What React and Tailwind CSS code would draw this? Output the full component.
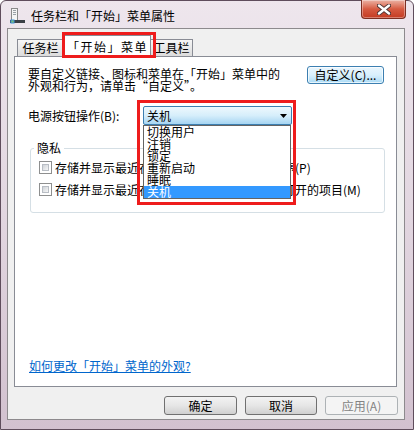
import React from "react";

const TaskbarIcon = () => (
  <svg width="16" height="16" viewBox="0 0 16 16" className="shrink-0">
    <rect x="1.5" y="0.5" width="6" height="12" fill="#f4f4f4" stroke="#8a8a8a" />
    <rect x="3" y="2" width="3" height="1" fill="#9aa0a6" />
    <rect x="3" y="4" width="3" height="1" fill="#9aa0a6" />
    <rect x="3" y="6" width="3" height="1" fill="#9aa0a6" />
    <rect x="0" y="12" width="15" height="3" fill="#3a3f45" />
    <rect x="0.5" y="11.5" width="4" height="4" fill="#3f8fd8" />
    <rect x="1.5" y="12.5" width="2" height="2" fill="#7cc46a" />
  </svg>
);

const CloseButton = () => (
  <div className="w-[45px] h-[19px] -mt-px ml-auto mr-[7px] rounded-b-[4px] border border-t-0 border-[#7d2f22] bg-gradient-to-b from-[#eab2a4] via-[#d65a41] to-[#c43b22] flex items-center justify-center shadow-[inset_0_0_0_1px_rgba(255,255,255,0.35)]">
    <svg width="14" height="11" viewBox="0 0 14 11">
      <path d="M2 1.5 L12 9.5 M12 1.5 L2 9.5" stroke="#4a3232" strokeWidth="4.2" strokeLinecap="round" />
      <path d="M2 1.5 L12 9.5 M12 1.5 L2 9.5" stroke="#ffffff" strokeWidth="2.4" strokeLinecap="round" />
    </svg>
  </div>
);

const Checkbox = () => (
  <div className="w-[13px] h-[13px] shrink-0 border border-[#8e8f8f] bg-white p-[2px]">
    <div className="w-full h-full border border-[#b8bdc4] bg-gradient-to-br from-[#cfd3d8] to-[#f7f7f7]" />
  </div>
);

const Button = ({ children, disabled, width }) => (
  <div
    className={
      disabled
        ? "h-[19px] rounded-[3px] border border-[#adb2b5] bg-[#f4f4f4] text-[#838383] flex items-center justify-center " + width
        : "h-[19px] rounded-[3px] border border-[#707070] bg-gradient-to-b from-[#f3f3f3] via-[#e6e6e6] to-[#d0d0d0] flex items-center justify-center " + width
    }
  >
    {children}
  </div>
);

const items = ["切换用户", "注销", "锁定", "重新启动", "睡眠", "关机"];

const App = () => {
  return (
    <div className="w-[414px] h-[430px] overflow-hidden bg-white font-['Noto_Sans_CJK_SC',sans-serif] text-[12px] leading-[12px] text-black">
      <div className="h-[430px] border border-[#5f4d5c] rounded-t-[6px] bg-gradient-to-b from-[#eee6ed] via-[#e2d6e0] to-[#d2c1cf] flex flex-col">
        {/* title bar */}
        <div className="h-[27px] shrink-0 flex items-start">
          <div className="ml-[9px] mt-[7px]">
            <TaskbarIcon />
          </div>
          <span className="ml-[5px] mt-[9px]">任务栏和「开始」菜单属性</span>
          <CloseButton />
        </div>

        {/* client area */}
        <div className="ml-[6px] mr-[8px] mb-[9px] flex-1 bg-[#f0f0f0] border border-[#8d8a8d] flex flex-col">
          {/* tabs */}
          <div className="relative z-10 flex items-end h-[22px] mt-[6px] ml-[9px] -mb-px">
            <div className="w-[47px] h-[17px] mb-px border border-b-0 border-[#898c95] bg-gradient-to-b from-[#f6f6f6] to-[#dcdcdc] flex items-center justify-center">
              任务栏
            </div>
            <div className="relative w-[87px] h-[22px] border border-b-0 border-[#898c95] bg-white flex items-center justify-center">
              <span className="tracking-[1.5px]">「开始」菜单</span>
              <div className="absolute -left-[3px] -top-[4px] w-[94px] h-[26px] border-[3px] border-[#ee1c1c]" />
            </div>
            <div className="w-[42px] h-[17px] mb-px border border-b-0 border-l-0 border-[#898c95] bg-gradient-to-b from-[#f6f6f6] to-[#dcdcdc] flex items-center justify-center">
              工具栏
            </div>
          </div>

          {/* panel */}
          <div className="ml-[6px] w-[383px] h-[331px] bg-white border border-[#898c95] flex flex-col pl-[13px] pr-[12px]">
            <div className="flex justify-between items-start pt-[9px]">
              <div className="mt-[2px]">
                <div>要自定义链接、图标和菜单在「开始」菜单中的</div>
                <div>外观和行为，请单击“自定义”。</div>
              </div>
              <div className="w-[77px] h-[18px] rounded-[3px] border border-[#3c7fb1] bg-gradient-to-b from-[#eaf6fd] via-[#d9f0fc] to-[#a9daf5] flex items-center justify-center shadow-[inset_0_0_0_1px_rgba(255,255,255,0.7)]">
                自定义(C)...
              </div>
            </div>

            <div className="flex items-center mt-[14px]">
              <div className="w-[115px]">电源按钮操作(B):</div>
              <div className="relative z-20 w-[149px] h-[19px] rounded-[2px] border border-[#3c7fb1] bg-gradient-to-b from-[#eef8fd] via-[#d6eefb] to-[#a6d5f2] flex items-center pl-[3px]">
                <span>关机</span>
                <svg width="7" height="4" viewBox="0 0 7 4" className="ml-auto mr-[4px]">
                  <path d="M0 0 H7 L3.5 4 Z" fill="#000" />
                </svg>
                <div className="absolute -left-px top-[18px] w-[148px] border border-[#646464] bg-white">
                  {items.map((it, i) => (
                    <div
                      key={it}
                      className={
                        i === items.length - 1
                          ? "h-[12px] leading-[12px] pl-[3px] bg-[#3399ff] text-white"
                          : "h-[12px] leading-[12px] pl-[3px]"
                      }
                    >
                      {it}
                    </div>
                  ))}
                </div>
                <div className="absolute -left-[7px] -top-[7px] w-[159px] h-[105px] border-[3px] border-[#ee1c1c]" />
              </div>
            </div>

            <fieldset className="mt-[17px] ml-[2px] -mr-px border border-[#d5dfe5] rounded-[3px]">
              <legend className="ml-[3px] px-[3px]">隐私</legend>
              <div className="pt-[7px] pb-[16px] pl-[8px] flex flex-col gap-[9px]">
                <div className="flex items-center h-[13px] gap-[3px]">
                  <Checkbox />
                  <span>存储并显示最近在「开始」菜单中打开的程序(P)</span>
                </div>
                <div className="flex items-center h-[13px] gap-[3px]">
                  <Checkbox />
                  <span>存储并显示最近在「开始」菜单和任务栏中打开的项目(M)</span>
                </div>
              </div>
            </fieldset>

            <div className="mt-auto mb-[14px] ml-px text-[#0066cc] underline">
              如何更改「开始」菜单的外观?
            </div>
          </div>

          {/* footer buttons */}
          <div className="flex justify-end gap-[8px] mt-[9px] mr-[6px]">
            <Button width="w-[73px]">确定</Button>
            <Button width="w-[72px]">取消</Button>
            <Button width="w-[73px]" disabled>
              应用(A)
            </Button>
          </div>
        </div>
      </div>
    </div>
  );
};

export default App;
